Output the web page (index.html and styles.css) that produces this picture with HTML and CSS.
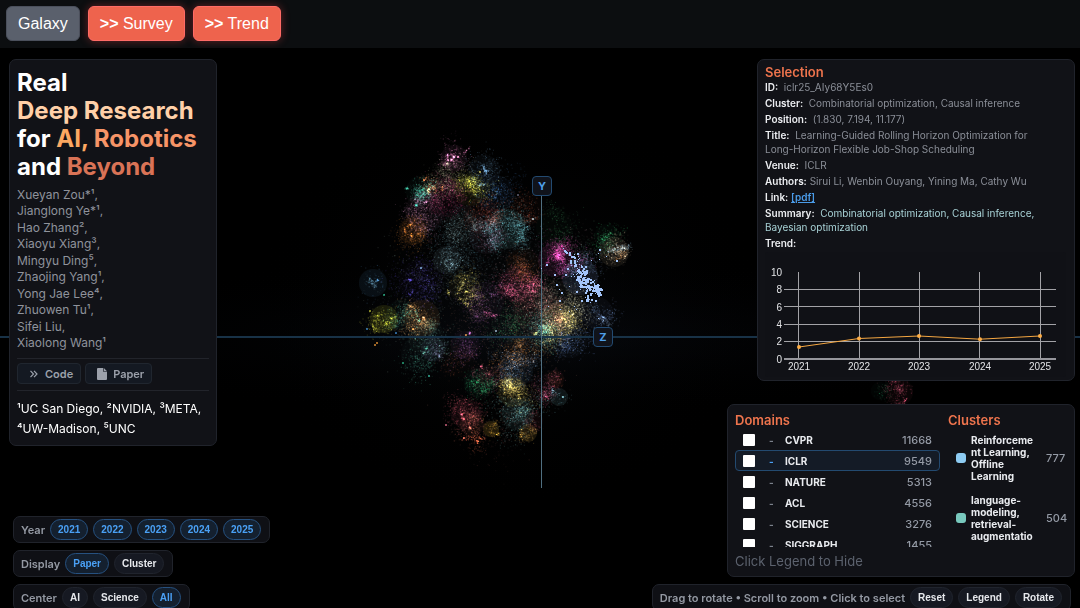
FILE: index.html
```html
<!DOCTYPE html>
<html lang="en">
<head>
<meta charset="utf-8">
<title>Real Deep Research</title>
<link rel="stylesheet" href="styles.css">
</head>
<body>
<header class="topbar">
  <button class="tab" type="button">Galaxy</button>
  <button class="tab tab-hot" type="button"><b>&gt;&gt;</b> Survey</button>
  <button class="tab tab-hot" type="button"><b>&gt;&gt;</b> Trend</button>
</header>
<main class="stage">
  <canvas class="galaxy" id="galaxy"></canvas>
  <span class="pin pin-y">Y</span>
  <span class="pin pin-z">Z</span>

  <div class="overlay">
    <div class="side side-left">
      <section class="panel paper">
        <h1 class="title">Real<br><span class="t-peach">Deep Research</span><br>for <span class="t-amber">AI,</span> <span class="t-orange">Robotics</span><br>and <span class="t-rust">Beyond</span></h1>
        <ul class="authors">
          <li>Xueyan Zou*¹,</li>
          <li>Jianglong Ye*¹,</li>
          <li>Hao Zhang²,</li>
          <li>Xiaoyu Xiang³,</li>
          <li>Mingyu Ding⁵,</li>
          <li>Zhaojing Yang¹,</li>
          <li>Yong Jae Lee⁴,</li>
          <li>Zhuowen Tu¹,</li>
          <li>Sifei Liu,</li>
          <li>Xiaolong Wang¹</li>
        </ul>
        <div class="links">
          <a class="link-btn" href="#code"><svg width="12" height="12" viewBox="0 0 12 12" fill="none" stroke="currentColor" stroke-width="1.2"><path d="M2.500 2.800 5.500 6 2.500 9.200M6 2.800 9 6 6 9.200"/></svg>Code</a>
          <a class="link-btn" href="#paper"><svg width="12" height="14" viewBox="0 0 12 14" fill="currentColor"><path d="M2 1h5.200v3.800H11V12a1 1 0 0 1-1 1H2a1 1 0 0 1-1-1V2a1 1 0 0 1 1-1z"/><path d="M7.800 1 11 4.200H7.800z"/></svg>Paper</a>
        </div>
        <p class="affil">¹UC San Diego, ²NVIDIA, ³META, ⁴UW-Madison, ⁵UNC</p>
      </section>

      <div class="controls">
        <div class="bar"><span class="bar-label">Year</span>
          <button class="pill on" type="button">2021</button><button class="pill on" type="button">2022</button><button class="pill on" type="button">2023</button><button class="pill on" type="button">2024</button><button class="pill on" type="button">2025</button></div>
        <div class="bar"><span class="bar-label">Display</span>
          <button class="pill on" type="button">Paper</button><button class="pill" type="button">Cluster</button></div>
        <div class="bar"><span class="bar-label">Center</span>
          <button class="pill" type="button">AI</button><button class="pill" type="button">Science</button><button class="pill on" type="button">All</button></div>
      </div>
    </div>

    <div class="side side-right">
      <section class="panel selection">
        <h2 class="heading">Selection</h2>
        <p><b>ID:</b>&nbsp; iclr25_AIy68Y5Es0</p>
        <p><b>Cluster:</b>&nbsp; Combinatorial optimization, Causal inference</p>
        <p><b>Position:</b>&nbsp; (1.830, 7.194, 11.177)</p>
        <p><b>Title:</b>&nbsp; Learning-Guided Rolling Horizon Optimization for Long-Horizon Flexible Job-Shop Scheduling</p>
        <p><b>Venue:</b>&nbsp; ICLR</p>
        <p><b>Authors:</b> Sirui Li, Wenbin Ouyang, Yining Ma, Cathy Wu</p>
        <p><b>Link:</b> <a class="pdf" href="#pdf">[pdf]</a></p>
        <p class="summary"><b>Summary:</b>&nbsp; Combinatorial optimization, Causal inference, Bayesian optimization</p>
        <p><b>Trend:</b></p>
        <svg class="chart" viewBox="0 0 301 125" role="img" aria-label="Trend by year">
          <g class="grid">
            <path d="M19 37.500H291M19 54.500H291M19 72.500H291M19 89.500H291"/>
            <path d="M33.500 20V107M94.500 20V107M154.500 20V107M214.500 20V107M275.500 20V107"/>
          </g>
          <path class="axis" d="M19 107H291"/>
          <g class="ylab"><text x="17" y="24">10</text><text x="17" y="41">8</text><text x="17" y="59">6</text><text x="17" y="76">4</text><text x="17" y="93">2</text><text x="17" y="111">0</text></g>
          <g class="xlab"><text x="34" y="118">2021</text><text x="94" y="118">2022</text><text x="154" y="118">2023</text><text x="215" y="118">2024</text><text x="275" y="118">2025</text></g>
          <path class="series" d="M34 95 94 86.500 154 84 215 87.200 275 84"/>
          <g class="dots"><circle cx="34" cy="95" r="2"/><circle cx="94" cy="86.500" r="2"/><circle cx="154" cy="84" r="2"/><circle cx="215" cy="87.200" r="2"/><circle cx="275" cy="84" r="2"/></g>
        </svg>
      </section>

      <div class="bottom">
        <section class="panel legend">
          <div class="legend-cols">
            <div>
              <h2 class="heading">Domains</h2>
              <div class="scroll">
                <label class="domain"><input type="checkbox"><i>-</i><span>CVPR</span><em>11668</em></label>
                <label class="domain sel"><input type="checkbox"><i>-</i><span>ICLR</span><em>9549</em></label>
                <label class="domain"><input type="checkbox"><i>-</i><span>NATURE</span><em>5313</em></label>
                <label class="domain"><input type="checkbox"><i>-</i><span>ACL</span><em>4556</em></label>
                <label class="domain"><input type="checkbox"><i>-</i><span>SCIENCE</span><em>3276</em></label>
                <label class="domain"><input type="checkbox"><i>-</i><span>SIGGRAPH</span><em>1455</em></label>
              </div>
            </div>
            <div>
              <h2 class="heading">Clusters</h2>
              <div class="scroll clusters">
                <div class="cluster"><span class="swatch blue"></span><span class="cname">Reinforcement Learning, Offline Learning</span><em>777</em></div>
                <div class="cluster"><span class="swatch teal"></span><span class="cname">language-modeling, retrieval-augmentation</span><em>504</em></div>
              </div>
            </div>
          </div>
          <p class="hide-hint">Click Legend to Hide</p>
        </section>
        <div class="bar bar-right"><span class="bar-label">Drag to rotate • Scroll to zoom • Click to select</span>
          <button class="pill" type="button">Reset</button><button class="pill" type="button">Legend</button><button class="pill" type="button">Rotate</button></div>
      </div>
    </div>
  </div>
</main>
<script src="galaxy.js"></script>
</body>
</html>
```
FILE: styles.css
```css
* { box-sizing: border-box; }
body { margin: 0; background: #000; color: #fff; font-family: Inter, sans-serif; overflow: hidden; }
h1, h2, p, ul { margin: 0; padding: 0; }
ul { list-style: none; }
button, a { cursor: pointer; }

.topbar { display: flex; gap: 8px; height: 48px; padding: 6px; align-items: flex-start; background: #0c0e10; }
.tab { height: 35px; padding: 0 11px; border: 1px solid #4b505c; border-radius: 6px; background: #5a606c; color: #fff; font: 16px/20px "Liberation Sans", Arial, sans-serif; }
.tab-hot { border-color: #ff6b66; background: #ee634d; box-shadow: 0 0 8px rgba(239, 68, 68, .4); }

.stage { position: relative; height: calc(100vh - 48px); overflow: hidden; background: #000; }
.galaxy { position: absolute; inset: 0; width: 100%; height: 100%; }
.pin { position: absolute; width: 20px; height: 20px; border: 1px solid #234a70; border-radius: 4px; background: #10131b; color: #4f9fe8; font-size: 11px; font-weight: 700; line-height: 18px; text-align: center; }
.pin-y { left: calc(50% - 8px); top: 128px; }
.pin-z { left: calc(50% + 53px); top: 279px; }

.overlay { position: absolute; inset: 0 0 -3px; display: flex; justify-content: space-between; padding: 11px 5px 0 9px; pointer-events: none; }
.side { display: flex; flex-direction: column; justify-content: space-between; pointer-events: auto; }
.side-right { align-items: flex-end; }
.panel { border: 1px solid #20232b; border-radius: 7px; background: #111217; }

.paper { width: 208px; padding: 9px 7px 6px; }
.title { font-size: 24px; line-height: 28px; font-weight: 700; white-space: nowrap; }
.t-peach { color: #ffd0a8; }
.t-amber { color: #fca862; }
.t-orange { color: #f79467; }
.t-rust { color: #d97356; }
.authors { display: flex; flex-direction: column; justify-content: space-between; min-height: 164px; margin-top: 6px; color: #8f939c; font-size: 12px; line-height: 16px; }
.links { display: flex; gap: 4px; margin-top: 7px; padding: 4px 0 6px; border: solid #22242b; border-width: 1px 0; }
.link-btn { display: flex; align-items: center; gap: 5px; height: 21px; padding: 0 7px 0 10px; border: 1px solid #20262f; border-radius: 4px; background: #141922; color: #9ca1ab; font-size: 11px; line-height: 16px; font-weight: 600; text-decoration: none; }
.affil { margin-top: 8px; font-size: 12px; line-height: 20px; }

.controls { display: flex; flex-direction: column; align-items: flex-start; gap: 7px; margin-left: 4px; }
.bar { display: flex; align-items: center; gap: 5px; height: 27px; padding: 0 8px 0 7px; border: 1px solid #20232b; border-radius: 7px; background: #0f1015; }
.bar-label { color: #9499a3; font-size: 11px; line-height: 16px; font-weight: 600; white-space: nowrap; }
.pill { height: 21px; padding: 0 7px; border: 1px solid #20242d; border-radius: 11px; background: #161922; color: #e6e8ec; font: bold 10px/16px "Liberation Sans", Arial, sans-serif; }
.pill.on { border-color: #265180; background: #14202f; color: #4aa0f5; }

.selection { width: 318px; padding: 4px 8px 3px 7px; color: #8b8f98; font-size: 10px; line-height: 14px; }
.heading { color: #ee744d; font-size: 13px; line-height: 16px; font-weight: 600; }
.selection p { margin-bottom: 2px; padding-right: 16px; }
.selection b { color: #eceef1; font-weight: 600; }
.selection .summary { color: #a8d2d6; }
.pdf { color: #4a9be8; font-weight: 600; }
.chart { display: block; width: 100%; background: #101116; border-radius: 3px; }
.grid { fill: none; stroke: #a3a3a7; }
.axis { stroke: #96969c; stroke-width: 2; }
.series { fill: none; stroke: #f5a742; }
.dots { fill: #ffae45; }
.chart text { fill: #e2e3e6; font: 10px "Liberation Sans", Arial, sans-serif; }
.ylab { text-anchor: end; }
.xlab { text-anchor: middle; }

.bottom { display: flex; flex-direction: column; align-items: flex-end; gap: 7px; }
.legend { width: 348px; padding: 7px 8px 5px 7px; }
.legend-cols { display: grid; grid-template-columns: 205px 1fr; gap: 8px; }
.scroll { height: 119px; padding-top: 1px; overflow: hidden; }
.legend em { color: #949aa5; font-size: 11px; font-style: normal; font-weight: 500; }
.domain { display: grid; grid-template-columns: 12px 8px 1fr auto; align-items: center; height: 21px; padding: 0 7px; border: 1px solid transparent; border-radius: 4px; font-size: 10px; line-height: 14px; font-weight: 700; color: #e9ebef; }
.domain input { appearance: none; width: 12px; height: 12px; margin: 0; border-radius: 1px; background: #fff; }
.domain i { margin-left: 14px; color: #7b818c; font-style: normal; }
.domain span { margin-left: 22px; }
.domain.sel { border-color: #234a70; background: #141b26; }
.domain.sel i { color: #4aa0f5; }
.clusters { padding-top: 6px; }
.cluster { display: flex; align-items: center; height: 48px; margin-bottom: 12px; padding-left: 8px; }
.swatch { flex: none; width: 10px; height: 10px; margin-right: 5px; border-radius: 3px; }
.blue { background: #8dcbf2; }
.teal { background: #78c8bd; }
.cname { width: 67px; height: 48px; margin-right: 8px; overflow: hidden; overflow-wrap: anywhere; color: #e9ebef; font-size: 10px; line-height: 12px; font-weight: 700; }
.hide-hint { margin-top: 5px; margin-bottom: 1px; color: #5c626e; font-size: 13px; line-height: 18px; }
.bar-right { margin-right: 4px; }
```
FILE: galaxy.js
```js
const canvas = document.getElementById('galaxy');
let seed = 20251;
const rnd = () => {
  seed = (seed * 1664525 + 1013904223) >>> 0;
  return seed / 4294967296;
};
const gauss = () => (rnd() + rnd() + rnd() + rnd() - 2) * 0.9;

// x, y, radius relative to the axis origin; colour; point count; halo alpha; hot spots
const clusters = [
  [-87, -179, 13, '200,110,160', 260, .10, 5], [-57, -166, 16, '100,150,190', 260, .07, 4],
  [-90, -160, 18, '150,150,120', 480, .04, 1], [-71, -147, 16, '190,190,60', 620, .08, 1],
  [-120, -146, 15, '60,190,160', 380, .05, 3], [-113, -152, 12, '220,120,60', 150, 0, 3],
  [-96, -140, 20, '170,50,100', 600, .07, 0], [-116, -125, 20, '170,110,150', 600, .07, 1],
  [-46, -143, 19, '50,100,160', 320, .08, 0], [-128, -106, 14, '215,120,40', 330, .14, 3],
  [-60, -121, 18, '180,70,50', 380, .05, 0], [-77, -112, 19, '120,150,150', 420, .06, 1],
  [-35, -108, 20, '100,180,190', 1050, .13, 0], [-14, -128, 16, '170,70,45', 200, .05, 0],
  [-55, -100, 17, '160,90,130', 250, .08, 0], [13, -110, 18, '50,140,80', 180, .04, 0],
  [-94, -77, 14, '120,160,170', 330, .14, 0], [-168, -54, 14, '70,130,180', 40, .15, 1],
  [-120, -55, 22, '80,65,190', 430, .03, 2], [-78, -50, 14, '195,180,80', 380, .06, 2],
  [-56, -36, 19, '140,75,145', 320, .08, 1], [-24, -53, 18, '215,75,120', 780, .10, 1],
  [-18, -72, 17, '190,90,40', 330, .05, 0], [14, -77, 17, '205,60,155', 850, .14, 1],
  [39, -60, 18, '115,140,200', 300, .20, 0], [73, -85, 15, '170,150,120', 340, .15, 2],
  [66, -101, 12, '45,180,100', 140, .04, 0], [-157, -18, 14, '190,195,45', 220, .19, 3],
  [-140, -22, 15, '60,160,135', 230, .05, 2], [-119, -19, 18, '205,140,75', 560, .13, 2],
  [-115, 0, 18, '90,160,140', 350, .05, 1], [-122, 18, 18, '60,160,130', 200, .04, 1],
  [-108, 12, 12, '120,120,160', 90, .12, 1], [-76, 8, 14, '150,75,155', 220, .08, 1],
  [-4, -27, 24, '190,110,100', 950, .08, 0], [20, -32, 24, '165,165,140', 1000, .06, 0],
  [17, -16, 18, '215,195,95', 950, .13, 1], [2, -7, 16, '85,190,170', 500, .04, 0],
  [-30, -12, 19, '60,160,90', 320, .03, 0], [28, 3, 18, '95,130,200', 350, .04, 0],
  [56, -24, 16, '90,120,170', 200, .08, 1], [-20, 13, 17, '215,130,50', 480, .05, 0],
  [-25, 33, 17, '110,150,190', 520, .10, 0], [-28, 55, 15, '210,185,85', 700, .12, 1],
  [-23, 77, 16, '110,180,180', 560, .12, 0], [-62, 46, 15, '35,155,90', 340, .06, 1],
  [-53, 38, 10, '205,80,110', 130, .05, 1], [-75, 77, 15, '205,75,95', 380, .11, 2],
  [-69, 87, 12, '215,110,85', 160, .11, 1], [-50, 92, 8, '200,150,45', 70, .24, 1],
  [-13, 96, 9, '200,155,65', 110, .20, 1], [-7, 84, 9, '150,60,75', 70, .11, 0],
  [14, 42, 9, '160,70,50', 50, .12, 0], [4, 52, 15, '195,80,120', 270, .04, 1],
  [18, 60, 9, '105,170,185', 40, .17, 1], [-83, 24, 16, '130,55,35', 120, .02, 0],
  [-62, -22, 24, '110,70,60', 240, 0, 0], [-83, -90, 38, '60,110,125', 600, 0, 0],
  [-45, 65, 34, '120,60,55', 420, 0, 0], [-64, 101, 10, '220,95,60', 80, 0, 2],
  [-55, -60, 50, '90,110,120', 480, 0, 0], [10, -60, 50, '140,100,110', 600, 0, 0],
  [-105, -35, 40, '100,120,110', 350, 0, 0], [35, -95, 34, '50,110,80', 260, 0, 0],
  [-30, 25, 40, '130,90,70', 420, 0, 0],
  [359, 55, 13, '190,70,100', 320, .08, 1], [339, 54, 9, '30,130,80', 40, .05, 0]
];

function draw() {
  const w = canvas.clientWidth;
  const h = canvas.clientHeight;
  canvas.width = w;
  canvas.height = h;
  seed = 20251;
  const c = canvas.getContext('2d');
  const ox = Math.round(w / 2) + 1;
  const oy = 289;
  c.save();
  c.translate(ox, oy);

  // dim nebula behind the points
  c.save();
  c.scale(1, .8);
  const haze = c.createRadialGradient(-30, -40, 40, -30, -40, 260);
  haze.addColorStop(0, 'rgba(8,10,12,.5)');
  haze.addColorStop(1, 'rgba(0,0,0,0)');
  c.fillStyle = haze;
  c.fillRect(-300, -300, 600, 600);
  c.restore();
  c.save();
  c.scale(1, .15);
  const band = c.createRadialGradient(0, 0, 60, 0, 0, 540);
  band.addColorStop(0, 'rgba(10,14,22,.35)');
  band.addColorStop(1, 'rgba(0,0,0,0)');
  c.fillStyle = band;
  c.fillRect(-540, -540, 1080, 1080);
  c.restore();

  c.globalCompositeOperation = 'lighter';
  for (const [x, y, r, rgb, n, halo, hot] of clusters) {
    c.fillStyle = `rgba(${rgb},${halo * .65})`;
    c.beginPath();
    c.arc(x, y, r, 0, 7);
    c.fill();
    // each cluster is a few overlapping clumps of papers
    for (let k = 0; k < 7; k++) {
      const kx = x + gauss() * r * .9;
      const ky = y + gauss() * r * .9;
      const kr = r * (.35 + rnd() * .7);
      for (let i = 0; i < n / 4.5; i++) {
        c.fillStyle = `rgba(${rgb},${.06 + rnd() * rnd() * .4})`;
        c.fillRect(kx + gauss() * kr, ky + gauss() * kr, 1, 1);
      }
    }
    for (let k = 0; k < hot; k++) {
      const hx = x + gauss() * r * .9;
      const hy = y + gauss() * r * .9;
      const dx = gauss();
      const dy = gauss();
      for (let i = 0; i < 18; i++) {
        const t = gauss() * 4;
        c.fillStyle = `rgba(${rgb},${.2 + rnd() * .35})`;
        c.fillRect(hx + dx * t + gauss() * 1.4, hy + dy * t + gauss() * 1.4, 1, 1);
      }
    }
  }

  // isolated bright papers at the rim
  const sparks = [[-172, -27, '190,190,50'], [-165, 5, '240,150,50'], [-167, 7, '240,150,50'], [-175, -9, '60,140,210'],
    [-158, -43, '40,180,130'], [-139, 25, '40,180,130'], [-113, 38, '60,200,170'], [-121, -70, '130,190,210'],
    [-84, -181, '235,150,200'], [-94, -178, '235,150,200'], [-62, -166, '200,190,90'], [-76, -3, '240,160,60'],
    [-129, -9, '240,150,60'], [-146, -5, '60,140,210'], [-9, -119, '190,220,230'], [-24, -143, '110,110,130'],
    [-96, 87, '230,110,140'], [-78, 100, '240,120,100'], [-46, -7, '170,190,220'], [21, 59, '150,220,230']];
  for (const [x, y, rgb] of sparks) {
    c.fillStyle = `rgba(${rgb},.65)`;
    c.fillRect(x, y, 2, 2);
  }
  // bright filaments: start, end, colour, count
  const streaks = [[-173, -59, -166, -51, '110,170,200', 60], [-76, -60, -84, -43, '210,190,90', 60],
    [-82, -40, -73, -32, '210,190,90', 50], [68, -87, 89, -91, '140,180,205', 120], [75, -78, 86, -85, '210,135,70', 50],
    [60, -96, 69, -105, '50,190,110', 60], [-57, -25, -44, -21, '220,85,150', 60], [57, -21, 69, -12, '120,145,180', 70],
    [14, -84, 23, -76, '215,70,165', 80], [-170, -11, -163, -6, '210,210,50', 40], [-84, 100, -66, 101, '215,90,60', 50]];
  for (const [x1, y1, x2, y2, rgb, n] of streaks) {
    for (let i = 0; i < n; i++) {
      const t = rnd();
      c.fillStyle = `rgba(${rgb},${.1 + rnd() * .35})`;
      c.fillRect(x1 + (x2 - x1) * t + gauss() * 3, y1 + (y2 - y1) * t + gauss() * 3, 1, 1);
    }
  }

  c.globalCompositeOperation = 'source-over';
  c.fillStyle = '#183247';
  c.fillRect(-ox, -1, w, 2);
  c.fillStyle = '#506f80';
  c.fillRect(0, -141, 1, 292);

  // papers of the selected cluster
  c.fillStyle = '#a3c5fa';
  const picked = [[21, -89, 34, -79, 1, 12], [39, -69, 42, -52, 6, 62], [38, -58, 55, -47, 8, 40],
    [51, -50, 59, -46, 4, 62], [45, -40, 49, -37, 3, 12], [12, -62, 45, -28, 18, 24],
    [32, -82, 38, -64, 8, 22], [52, -78, 76, -86, 8, 6]];
  for (const [x1, y1, x2, y2, spread, n] of picked) {
    for (let i = 0; i < n; i++) {
      const t = rnd();
      const s = rnd() < .6 ? 2 : 1;
      c.fillRect(Math.round(x1 + (x2 - x1) * t + gauss() * spread), Math.round(y1 + (y2 - y1) * t + gauss() * spread), s, s);
    }
  }
  c.restore();
}
draw();
window.addEventListener('resize', draw);
```
